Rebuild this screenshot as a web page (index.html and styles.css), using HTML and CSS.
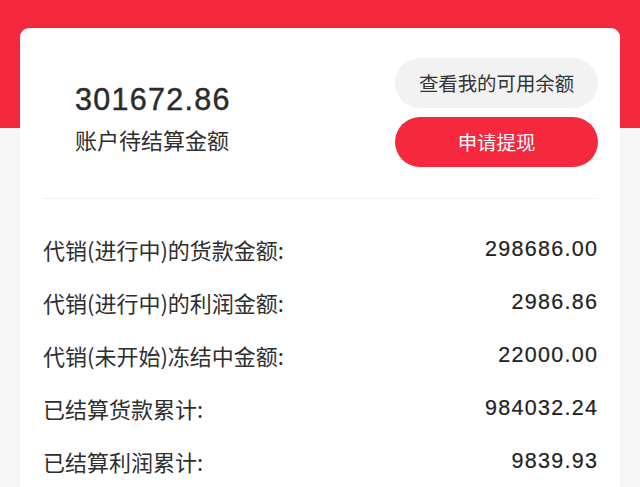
FILE: index.html
```html
<!DOCTYPE html>
<html lang="zh-CN">
<head>
<meta charset="utf-8">
<title>账户待结算金额</title>
<link rel="stylesheet" href="styles.css">
</head>
<body>
<div class="page">
  <div class="card">
    <div class="summary">
      <div class="total">
        <div class="total-amount">301672.86</div>
        <div class="total-label">账户待结算金额</div>
      </div>
      <div class="actions">
        <div class="btn btn-light">查看我的可用余额</div>
        <div class="btn btn-red">申请提现</div>
      </div>
    </div>
    <div class="rows">
      <div class="row"><span class="row-label">代销(进行中)的货款金额:</span><span class="row-value">298686.00</span></div>
      <div class="row"><span class="row-label">代销(进行中)的利润金额:</span><span class="row-value">2986.86</span></div>
      <div class="row"><span class="row-label">代销(未开始)冻结中金额:</span><span class="row-value">22000.00</span></div>
      <div class="row"><span class="row-label">已结算货款累计:</span><span class="row-value">984032.24</span></div>
      <div class="row"><span class="row-label">已结算利润累计:</span><span class="row-value">9839.93</span></div>
    </div>
  </div>
</div>
</body>
</html>
```
FILE: styles.css
```css
html, body {
  margin: 0;
  padding: 0;
  height: 100%;
}
body {
  background: linear-gradient(#f5283e 0, #f5283e 128px, #f6f6f6 128px);
  font-family: "Noto Sans CJK SC", "Liberation Sans", sans-serif;
  color: #333;
  overflow: hidden;
}
.page {
  padding: 28px 20px 0;
  height: 100%;
  box-sizing: border-box;
}
.card {
  background: #fff;
  border-radius: 9px 9px 0 0;
  padding: 0 22px 0 23px;
  height: 100%;
  box-sizing: border-box;
}
.summary {
  display: flex;
  justify-content: space-between;
  align-items: center;
  padding: 30px 0 31px 32px;
  border-bottom: 1px solid #f1f1f1;
}
.total {
  padding-top: 6px;
}
.total-amount {
  font-family: "Liberation Sans", Arial, sans-serif;
  font-size: 30.5px;
  letter-spacing: 1.3px;
  line-height: 34px;
  color: #2b2b2b;
  -webkit-text-stroke: 0.45px #2b2b2b;
}
.total-label {
  margin-top: 12px;
  font-size: 22px;
  line-height: 22px;
  color: #2e2e2e;
}
.actions {
  display: flex;
  flex-direction: column;
  gap: 9px;
}
.btn {
  width: 203px;
  height: 50px;
  border-radius: 25px;
  display: flex;
  align-items: center;
  justify-content: center;
  font-size: 19.4px;
  line-height: 1;
}
.btn-light {
  background: #f2f2f2;
  color: #333;
}
.btn-red {
  background: #f5283e;
  color: #fff;
}
.rows {
  padding-top: 23px;
}
.row {
  height: 53px;
  display: flex;
  justify-content: space-between;
  align-items: center;
  padding-right: 1px;
}
.row-label {
  font-size: 22px;
  line-height: 22px;
  color: #2e2e2e;
}
.row-value {
  font-family: "Liberation Sans", Arial, sans-serif;
  font-size: 21.5px;
  letter-spacing: 1.3px;
  margin-right: -1.3px;
  line-height: 22px;
  color: #222;
  -webkit-text-stroke: 0.2px #222;
}
```
